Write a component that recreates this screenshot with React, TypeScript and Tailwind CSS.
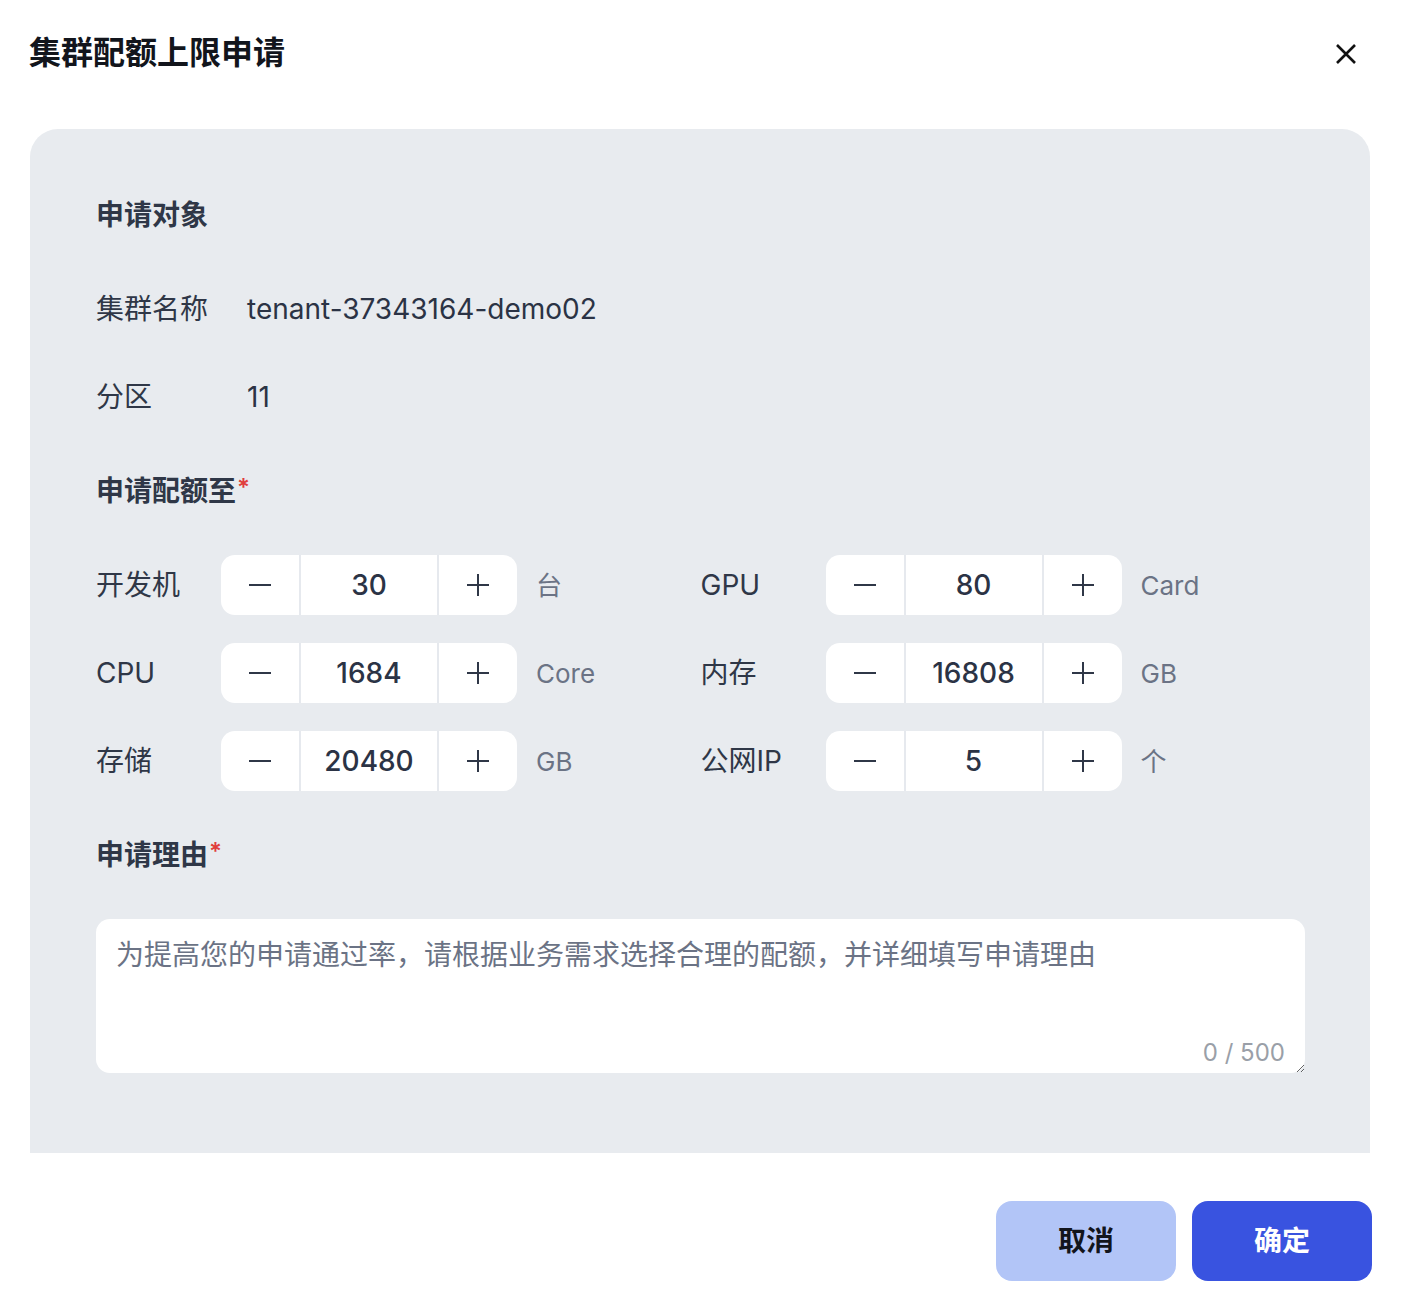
import React, { useState } from 'react';

const FONT = 'font-["Inter","Noto_Sans_CJK_SC",sans-serif]';

const Minus = () => (
  <svg width="24" height="24" viewBox="0 0 24 24" fill="none">
    <path d="M1 12h22" stroke="#2f3747" strokeWidth="2" />
  </svg>
);

const Plus = () => (
  <svg width="24" height="24" viewBox="0 0 24 24" fill="none">
    <path d="M1 12h22M12 1v22" stroke="#2f3747" strokeWidth="2" />
  </svg>
);

const Stepper: React.FC<{ value: number }> = ({ value }) => (
  <div className="flex h-[60px] w-[296px] overflow-hidden rounded-[14px] bg-white">
    <button className="flex w-[78px] items-center justify-center">
      <Minus />
    </button>
    <div className="flex flex-1 items-center justify-center border-x-2 border-[#e6e9ee] text-[28px] font-medium text-[#2b3345]">
      {value}
    </div>
    <button className="flex w-[78px] items-center justify-center">
      <Plus />
    </button>
  </div>
);

const QuotaItem: React.FC<{ label: string; value: number; unit: string }> = ({ label, value, unit }) => (
  <div className="flex h-[60px] w-[606px] items-center">
    <span className="w-[125px] text-[28px] text-[#2f3747]">{label}</span>
    <Stepper value={value} />
    <span className="ml-[19px] text-[26px] text-[#6b7385]">{unit}</span>
  </div>
);

const SectionTitle: React.FC<{ children: React.ReactNode; required?: boolean }> = ({ children, required }) => (
  <div className="flex h-[40px] items-center text-[28px] font-bold text-[#2f3747]">
    {children}
    {required && <span className="ml-[1px] -mt-[6px] text-[24px] font-semibold text-[#e03e3e]">*</span>}
  </div>
);

export default function App() {
  const [reason, setReason] = useState('');

  return (
    <div className={`${FONT} min-h-[1292px] w-[1414px] bg-white`}>
      {/* Header */}
      <div className="flex h-[129px] items-start justify-between pl-[29px] pr-[56px] pt-[32px]">
        <h1 className="text-[32px] font-bold leading-[42px] text-[#12151c]">集群配额上限申请</h1>
        <button className="mt-[10px] flex h-[24px] w-[24px] items-center justify-center">
          <svg width="22" height="22" viewBox="0 0 22 22" fill="none">
            <path d="M2 2l18 18M20 2L2 20" stroke="#111" strokeWidth="2.6" />
          </svg>
        </button>
      </div>

      {/* Panel */}
      <div className="mx-[30px] w-[1340px] rounded-t-[28px] bg-[#e8ebef] pb-[80px] pl-[66px] pr-[65px] pt-[66px]">
        <SectionTitle>申请对象</SectionTitle>

        <div className="mt-[54px] flex h-[40px] items-center text-[28px]">
          <span className="w-[151px] text-[#2f3747]">集群名称</span>
          <span className="text-[#2b3345]">tenant-37343164-demo02</span>
        </div>
        <div className="mt-[48px] flex h-[40px] items-center text-[28px]">
          <span className="w-[151px] text-[#2f3747]">分区</span>
          <span className="text-[#2b3345]">11</span>
        </div>

        <div className="mt-[54px]">
          <SectionTitle required>申请配额至</SectionTitle>
        </div>

        <div className="mt-[44px] flex flex-col gap-[28px]">
          <div className="flex">
            <QuotaItem label="开发机" value={30} unit="台" />
            <QuotaItem label="GPU" value={80} unit="Card" />
          </div>
          <div className="flex">
            <QuotaItem label="CPU" value={1684} unit="Core" />
            <QuotaItem label="内存" value={16808} unit="GB" />
          </div>
          <div className="flex">
            <QuotaItem label="存储" value={20480} unit="GB" />
            <QuotaItem label="公网IP" value={5} unit="个" />
          </div>
        </div>

        <div className="mt-[44px]">
          <SectionTitle required>申请理由</SectionTitle>
        </div>

        <div className="relative mt-[44px] h-[154px] w-[1209px]">
          <textarea
            value={reason}
            onChange={(e) => setReason(e.target.value)}
            placeholder="为提高您的申请通过率，请根据业务需求选择合理的配额，并详细填写申请理由"
            className="block h-full w-full resize-y rounded-[14px] bg-white px-[20px] py-[16px] text-[28px] leading-[40px] text-[#2b3345] outline-none placeholder:text-[#6b7385]"
          />
          <span className="absolute bottom-[2px] right-[20px] text-[24px] text-[#9a9fa8]">
            {reason.length} / 500
          </span>
        </div>
      </div>

      {/* Footer */}
      <div className="flex justify-end gap-[16px] pr-[42px] pt-[48px]">
        <button className="h-[80px] w-[180px] rounded-[16px] bg-[#b2c5f7] text-[28px] font-bold text-[#12151c]">
          取消
        </button>
        <button className="h-[80px] w-[180px] rounded-[16px] bg-[#3953e0] text-[28px] font-bold text-white">
          确定
        </button>
      </div>
    </div>
  );
}
